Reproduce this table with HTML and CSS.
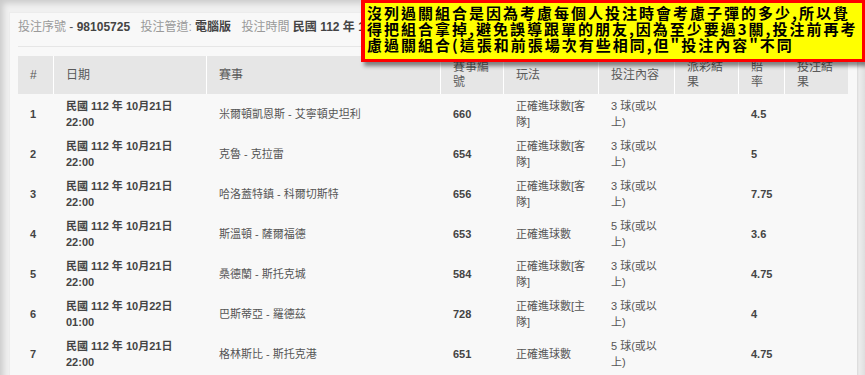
FILE: index.html
```html
<!DOCTYPE html>
<html lang="zh-Hant">
<head>
<meta charset="utf-8">
<title>投注明細</title>
<link rel="stylesheet" href="styles.css">
</head>
<body>
<div class="page">
  <div class="panel">
    <div class="info">
      <span class="item"><span class="label">投注序號</span> - <b class="value">98105725</b></span>
      <span class="item"><span class="label">投注管道:</span> <b class="value">電腦版</b></span>
      <span class="item"><span class="label">投注時間</span> <b class="value">民國 112 年 10月21日 20:15</b></span>
    </div>
    <table class="bets">
      <thead>
        <tr>
          <th class="c-no">#</th>
          <th class="c-date">日期</th>
          <th class="c-event">賽事</th>
          <th class="c-code">賽事編號</th>
          <th class="c-play">玩法</th>
          <th class="c-pick">投注內容</th>
          <th class="c-pay">派彩結果</th>
          <th class="c-odds">賠率</th>
          <th class="c-res">投注結果</th>
        </tr>
      </thead>
      <tbody>
        <tr><td class="b">1</td><td class="b">民國 112 年 10月21日 22:00</td><td>米爾頓凱恩斯 - 艾寧頓史坦利</td><td class="b">660</td><td>正確進球數[客隊]</td><td>3 球(或以上)</td><td></td><td class="b">4.5</td><td></td></tr>
        <tr><td class="b">2</td><td class="b">民國 112 年 10月21日 22:00</td><td>克魯 - 克拉雷</td><td class="b">654</td><td>正確進球數[客隊]</td><td>3 球(或以上)</td><td></td><td class="b">5</td><td></td></tr>
        <tr><td class="b">3</td><td class="b">民國 112 年 10月21日 22:00</td><td>哈洛蓋特鎮 - 科爾切斯特</td><td class="b">656</td><td>正確進球數[客隊]</td><td>3 球(或以上)</td><td></td><td class="b">7.75</td><td></td></tr>
        <tr><td class="b">4</td><td class="b">民國 112 年 10月21日 22:00</td><td>斯溫頓 - 薩爾福德</td><td class="b">653</td><td>正確進球數</td><td>5 球(或以上)</td><td></td><td class="b">3.6</td><td></td></tr>
        <tr><td class="b">5</td><td class="b">民國 112 年 10月21日 22:00</td><td>桑德蘭 - 斯托克城</td><td class="b">584</td><td>正確進球數[客隊]</td><td>3 球(或以上)</td><td></td><td class="b">4.75</td><td></td></tr>
        <tr><td class="b">6</td><td class="b">民國 112 年 10月22日 01:00</td><td>巴斯蒂亞 - 羅德茲</td><td class="b">728</td><td>正確進球數[主隊]</td><td>3 球(或以上)</td><td></td><td class="b">4</td><td></td></tr>
        <tr><td class="b">7</td><td class="b">民國 112 年 10月21日 22:00</td><td>格林斯比 - 斯托克港</td><td class="b">651</td><td>正確進球數</td><td>5 球(或以上)</td><td></td><td class="b">4.75</td><td></td></tr>
      </tbody>
    </table>
  </div>
  <div class="callout">沒列過關組合是因為考慮每個人投注時會考慮子彈的多少,所以覺<br>得把組合拿掉,避免誤導跟單的朋友,因為至少要過3關,投注前再考<br>慮過關組合(這張和前張場次有些相同,但"投注內容"不同</div>
</div>
</body>
</html>
```

FILE: styles.css
```css
html, body {
  margin: 0;
  padding: 0;
}
body {
  width: 865px;
  height: 375px;
  overflow: hidden;
  font-family: "Liberation Sans", Arial, "Noto Sans CJK TC", sans-serif;
  color: #555;
}
.page {
  position: relative;
  height: 375px;
  overflow: hidden;
  background: linear-gradient(to right, #f0f0f0 857px, #d9d9d9 857px, #ececec 859px, #e6e6e6 862px, #dedede 865px);
  box-shadow: inset 6px 6px 6px -3px rgba(0, 0, 0, 0.16);
}
.panel {
  margin: 12px 8px 0 9px;
  padding: 0 8px 0 8px;
  background: #f8f8f8;
  border-top: 1px solid #ececec;
  border-left: 1px solid #ececec;
  height: 400px;
}
.info {
  padding: 6px 0 10px 0;
  line-height: 17px;
  font-size: 12px;
  white-space: nowrap;
  overflow: hidden;
  border-bottom: 1px solid #e6e6e6;
}
.item {
  margin-right: 7px;
}
.label {
  color: #9a9a9a;
}
.value {
  color: #444;
  font-weight: bold;
}
.bets {
  margin-top: 9px;
  width: 830px;
  table-layout: fixed;
  border-collapse: separate;
  border-spacing: 0;
}
.bets th,
.bets td {
  box-sizing: border-box;
  text-align: left;
  vertical-align: middle;
  padding: 4px 11px 4px 12px;
}
.bets th {
  background: #e6e6e6;
  font-weight: normal;
  font-size: 12px;
  line-height: 15px;
  color: #5a5a5a;
  height: 38px;
}
.bets th + th {
  border-left: 1px solid #fff;
}
.bets td {
  font-size: 11px;
  line-height: 16px;
  height: 40px;
  color: #555;
}
.bets td + td {
  border-left: 1px solid transparent;
}
.bets td.b {
  font-weight: bold;
  color: #444;
}
.c-no { width: 35px; }
.c-date { width: 153px; }
.c-event { width: 234px; }
.c-code { width: 63px; }
.c-play { width: 95px; }
.c-pick { width: 76px; }
.c-pay { width: 64px; }
.c-odds { width: 46px; }
.c-res { width: 64px; }
.callout {
  position: absolute;
  left: 361px;
  top: 0;
  width: 504px;
  box-sizing: border-box;
  border: 3px solid #f00;
  border-left-width: 4px;
  background: #ffff00;
  padding: 2px 0 6px 2px;
  font-family: "Noto Sans CJK TC", "Noto Sans CJK SC", sans-serif;
  font-weight: bold;
  font-size: 15px;
  line-height: 16px;
  letter-spacing: 2px;
  color: #000;
  white-space: nowrap;
  box-shadow: 3px 4px 4px rgba(0, 0, 0, 0.45);
}
```
